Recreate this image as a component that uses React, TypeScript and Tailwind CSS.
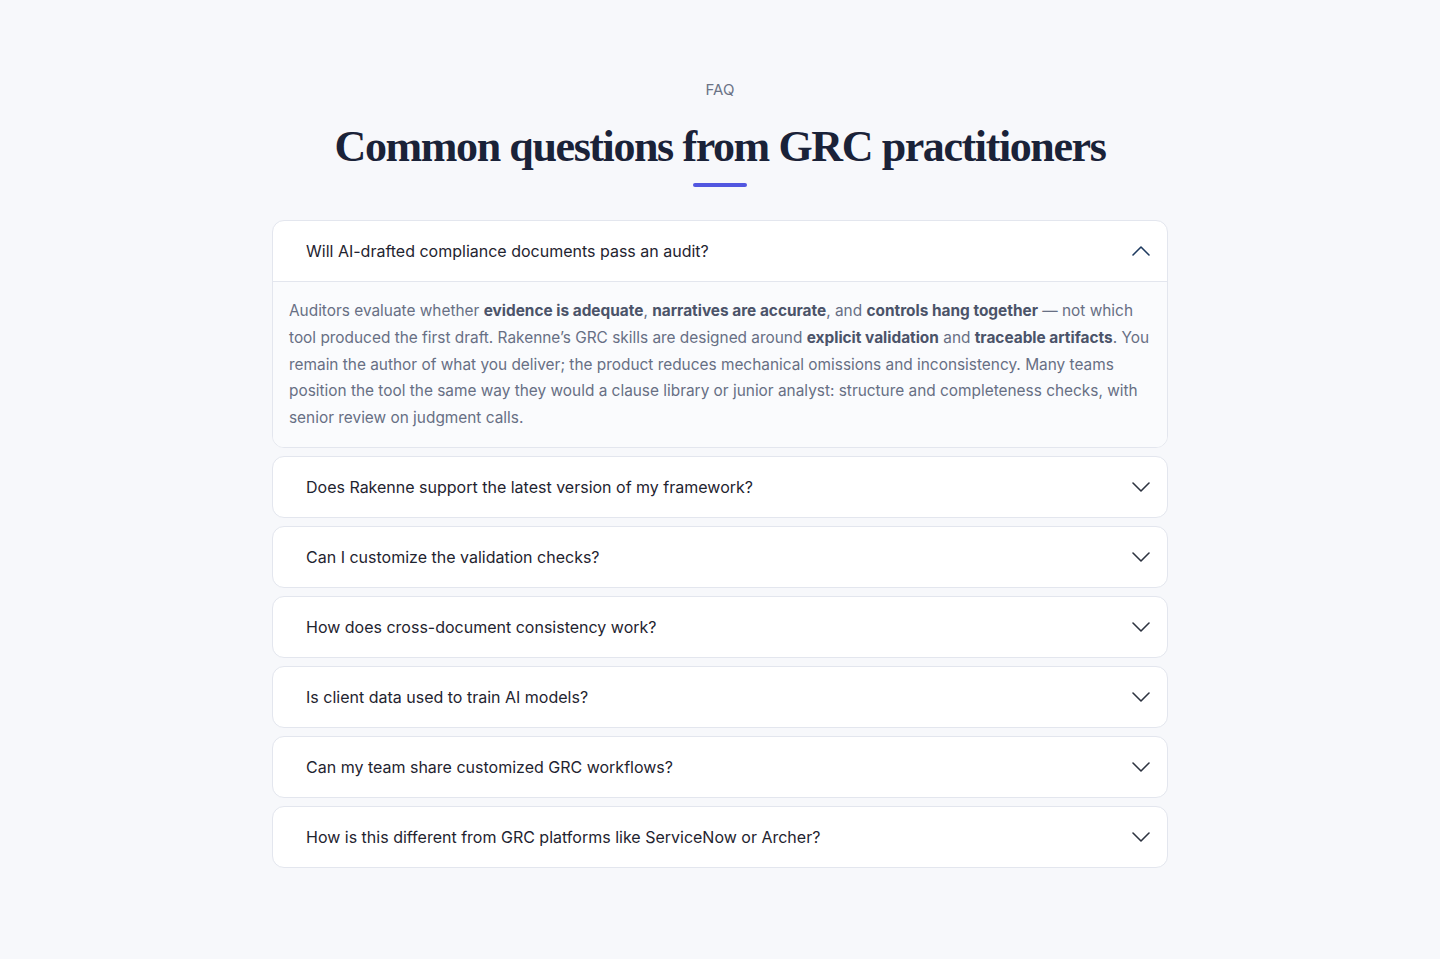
import { useState } from "react";

type Faq = {
    pergunta: string;
    resposta?: React.ReactNode;
};

const FAQS: Faq[] = [
    {
        pergunta: "Will AI-drafted compliance documents pass an audit?",
        resposta: (
            <>
                Auditors evaluate whether <strong>evidence is adequate</strong>,{" "}
                <strong>narratives are accurate</strong>, and{" "}
                <strong>controls hang together</strong> — not which tool produced the first
                draft. Rakenne’s GRC skills are designed around{" "}
                <strong>explicit validation</strong> and <strong>traceable artifacts</strong>.
                You remain the author of what you deliver; the product reduces mechanical
                omissions and inconsistency. Many teams position the tool the same way they
                would a clause library or junior analyst: structure and completeness checks,
                with senior review on judgment calls.
            </>
        ),
    },
    { pergunta: "Does Rakenne support the latest version of my framework?" },
    { pergunta: "Can I customize the validation checks?" },
    { pergunta: "How does cross-document consistency work?" },
    { pergunta: "Is client data used to train AI models?" },
    { pergunta: "Can my team share customized GRC workflows?" },
    { pergunta: "How is this different from GRC platforms like ServiceNow or Archer?" },
];

function Chevron({ aberto }: { aberto: boolean }) {
    return (
        <svg
            width="18"
            height="10"
            viewBox="0 0 18 10"
            fill="none"
            className={aberto ? "text-[#1e3a5f]" : "text-[#2d3340]"}
        >
            <path
                d={aberto ? "M1 9 L9 1 L17 9" : "M1 1 L9 9 L17 1"}
                stroke="currentColor"
                strokeWidth="1.6"
                strokeLinecap="round"
                strokeLinejoin="round"
            />
        </svg>
    );
}

export default function App() {
    const [aberto, setAberto] = useState<number | null>(0);

    return (
        <div
            className="min-h-screen bg-[#f7f8fb] pt-[79px] pb-24"
            style={{ fontFamily: "Inter, 'Noto Sans', sans-serif" }}
        >
            <div className="mx-auto w-[896px]">
                <div className="flex flex-col items-center">
                    <p className="text-[15px] leading-[22px] text-[#6b7386]">FAQ</p>
                    <h2 className="mt-[18px] text-[44px] leading-[56px] font-bold tracking-[-1.4px] text-[#1a2238] [font-family:'Liberation_Serif','DejaVu_Serif',serif]">
                        Common questions from GRC practitioners
                    </h2>
                    <div className="mt-[8px] h-1 w-[54px] rounded-full bg-[#5257e0]" />
                </div>

                <div className="mt-[33px] flex flex-col gap-2">
                    {FAQS.map((faq, i) => {
                        const isOpen = aberto === i;
                        return (
                            <div
                                key={faq.pergunta}
                                className="overflow-hidden rounded-xl border border-[#e3e6ee] bg-white"
                            >
                                <button
                                    type="button"
                                    onClick={() => setAberto(isOpen ? null : i)}
                                    className="flex h-[60px] w-full items-center justify-between pl-[33px] pr-[17px] text-left"
                                >
                                    <span className="text-[16px] text-[#1f2430]">
                                        {faq.pergunta}
                                    </span>
                                    <Chevron aberto={isOpen} />
                                </button>
                                {isOpen && faq.resposta && (
                                    <div className="border-t border-[#e3e6ee] bg-[#fafbfd] px-4 pt-[16px] pb-[15px] text-[15.4px] leading-[26.8px] text-[#676f84] [&_strong]:font-bold [&_strong]:text-[#4b5369]">
                                        {faq.resposta}
                                    </div>
                                )}
                            </div>
                        );
                    })}
                </div>
            </div>
        </div>
    );
}
